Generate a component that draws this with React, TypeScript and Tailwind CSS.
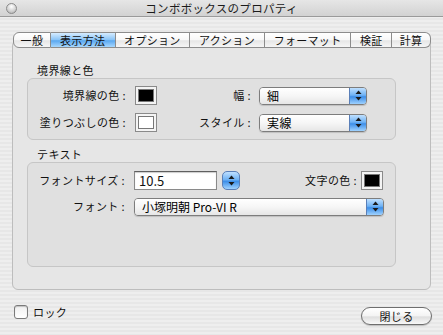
const font = { fontFamily: '"Noto Sans CJK JP", "Liberation Sans", sans-serif' };

const tabs = [
	{ label: "一般", w: "w-[38px]" },
	{ label: "表示方法", w: "w-[65px]", active: true },
	{ label: "オプション", w: "w-[75px]" },
	{ label: "アクション", w: "w-[75px]" },
	{ label: "フォーマット", w: "w-[87px]" },
	{ label: "検証", w: "w-[41px]" },
	{ label: "計算", w: "w-[39px]" },
];

function Arrows() {
	return (
		<svg width="7" height="11" viewBox="0 0 7 11">
			<path d="M3.5 0.5 L6.5 4 L0.5 4 Z" fill="#1a1a1a" />
			<path d="M3.5 10.5 L6.5 7 L0.5 7 Z" fill="#1a1a1a" />
		</svg>
	);
}

function Popup({ value, w }: { value: string; w: string }) {
	return (
		<div
			className={`${w} h-[18px] flex rounded-[4px] border border-[#7d7d7d] overflow-hidden shadow-[0_1px_1px_rgba(0,0,0,0.15)]`}
		>
			<div className="flex-1 flex items-center pl-[7px] text-[12px] text-black bg-[linear-gradient(#ffffff,#f6f6f6_50%,#e6e6e6)]">
				{value}
			</div>
			<div className="w-[17px] flex items-center justify-center border-l border-[#5a7fb8] bg-[linear-gradient(#bfe0ff,#6fb2f4_45%,#3d8ee8_55%,#9fd2ff)]">
				<Arrows />
			</div>
		</div>
	);
}

function Swatch({ color }: { color: string }) {
	return (
		<div className="w-[22px] h-[19px] border border-[#8a8a8a] bg-[#f4f4f4] flex items-center justify-center">
			<div className="w-[16px] h-[13px] border border-[#777]" style={{ background: color }} />
		</div>
	);
}

export default function App() {
	return (
		<div
			style={font}
			className="w-[443px] h-[335px] overflow-hidden text-[#111] bg-[repeating-linear-gradient(#eeeeee_0px,#eeeeee_2px,#e7e7e7_2px,#e7e7e7_4px)]"
		>
			{/* title bar */}
			<div className="h-[17px] grid grid-cols-[1fr_auto_1fr] items-center border-b border-[#9a9a9a] bg-[linear-gradient(#e6e6e6,#d2d2d2)]">
				<div className="pl-[6px] flex items-center">
					<div className="w-[11px] h-[11px] rounded-full border border-[#8a8a8a] bg-[radial-gradient(circle_at_50%_30%,#ffffff,#cfcfcf_60%,#a8a8a8)]" />
				</div>
				<div className="text-[11.5px] leading-[16px] tracking-[0.3px] text-[#1a1a1a]">コンボボックスのプロパティ</div>
				<div />
			</div>

			<div className="px-[12px]">
				{/* tabs */}
				<div className="relative z-10 mt-[15px] flex h-[16px] ml-px">
					{tabs.map((t, i) => (
						<div
							key={t.label}
							className={`${t.w} flex items-center justify-center text-[11px] leading-[14px] tracking-[0.3px] border-y border-[#8c8c8c] ${
								i === 0 ? "rounded-l-[6px] border-l" : ""
							} ${i === tabs.length - 1 ? "rounded-r-[6px] border-r" : "border-r"} ${
								t.active
									? "bg-[linear-gradient(#d6ecff,#86c2f6_50%,#5aa8f0_55%,#a8d8ff)] border-[#5b7ca8]"
									: "bg-[linear-gradient(#ffffff,#f7f7f7_50%,#e6e6e6_55%,#f6f6f6)]"
							}`}
						>
							{t.label}
						</div>
					))}
				</div>

				{/* tab panel */}
				<div className="-mt-[8px] w-[419px] h-[250px] rounded-[6px] border border-[#bdbdbd] bg-[#e6e6e6] px-[14px] pt-[22px] text-[11px] tracking-[0.4px]">
					<div className="pl-[10px] leading-[14px] h-[15px]">境界線と色</div>
					<div className="h-[62px] w-[369px] rounded-[6px] border border-[#c6c6c6] bg-[#e0e0e0] pt-[7px] flex flex-col gap-[8px]">
						<div className="flex items-center h-[19px]">
							<div className="w-[98px] text-right">境界線の色 :</div>
							<div className="ml-[9px]">
								<Swatch color="#000" />
							</div>
							<div className="w-[94px] text-right">幅 :</div>
							<div className="ml-[8px]">
								<Popup value="細" w="w-[108px]" />
							</div>
						</div>
						<div className="flex items-center h-[19px]">
							<div className="w-[98px] text-right">塗りつぶしの色 :</div>
							<div className="ml-[9px]">
								<Swatch color="#fff" />
							</div>
							<div className="w-[94px] text-right">スタイル :</div>
							<div className="ml-[8px]">
								<Popup value="実線" w="w-[108px]" />
							</div>
						</div>
					</div>

					<div className="mt-[7px] pl-[10px] leading-[14px] h-[15px]">テキスト</div>
					<div className="h-[105px] w-[369px] rounded-[6px] border border-[#c6c6c6] bg-[#e0e0e0] pt-[8px] flex flex-col gap-[7px]">
						<div className="flex items-center h-[19px]">
							<div className="w-[97px] text-right">フォントサイズ :</div>
							<div className="ml-[9px] w-[83px] h-[19px] border border-[#8a8a8a] border-t-[#5f5f5f] bg-white pl-[4px] text-[13px] tracking-normal leading-[17px] shadow-[inset_0_1px_1px_rgba(0,0,0,0.2)]">
								10.5
							</div>
							<div className="ml-[5px] w-[18px] h-[19px] rounded-[5px] border border-[#5a7fb8] flex items-center justify-center bg-[linear-gradient(#bfe0ff,#6fb2f4_45%,#3d8ee8_55%,#9fd2ff)]">
								<Arrows />
							</div>
							<div className="w-[117px] text-right">文字の色 :</div>
							<div className="ml-[4px]">
								<Swatch color="#000" />
							</div>
						</div>
						<div className="flex items-center h-[19px]">
							<div className="w-[97px] text-right">フォント :</div>
							<div className="ml-[9px] tracking-normal">
								<Popup value="小塚明朝 Pro-VI R" w="w-[250px]" />
							</div>
						</div>
					</div>
				</div>
			</div>

			{/* bottom */}
			<div className="mt-[14px] px-[14px] flex items-start justify-between text-[11px] tracking-[0.4px]">
				<div className="flex items-center gap-[5px]">
					<div className="w-[14px] h-[14px] rounded-[3px] border border-[#7a7a7a] bg-[linear-gradient(#f0f0f0,#ffffff)] shadow-[inset_0_1px_1px_rgba(0,0,0,0.2)]" />
					<span>ロック</span>
				</div>
				<div className="mt-[3px] mr-[-3px] w-[71px] h-[18px] rounded-full border border-[#6e6e6e] flex items-center justify-center bg-[linear-gradient(#ffffff,#f3f3f3_50%,#dedede_55%,#f8f8f8)] shadow-[0_1px_1px_rgba(0,0,0,0.2)]">
					閉じる
				</div>
			</div>
		</div>
	);
}
